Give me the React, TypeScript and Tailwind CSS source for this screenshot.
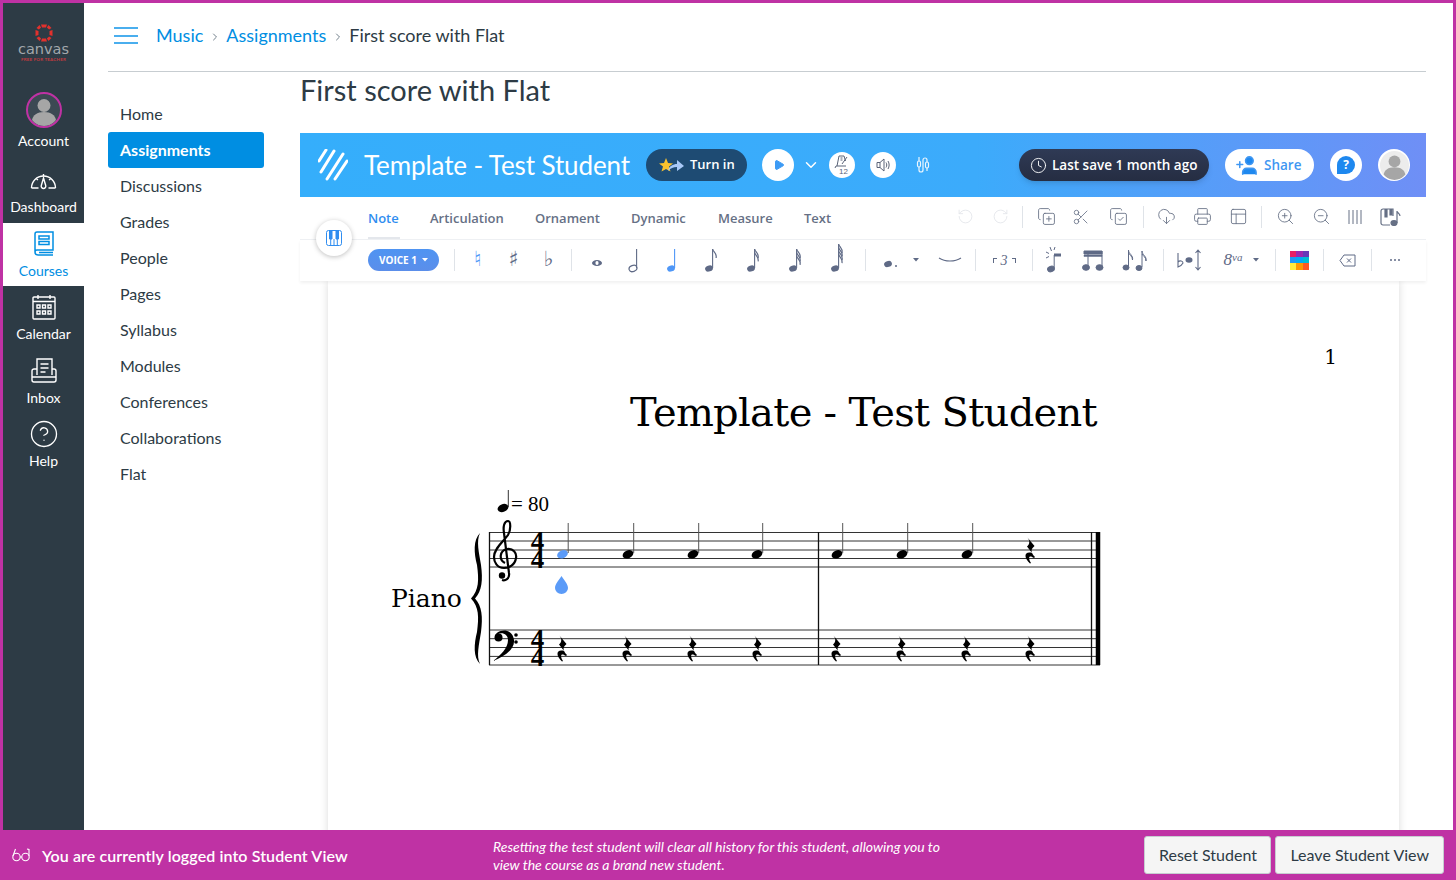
import React from 'react';
import { ChevronDown, ChevronRight, CircleHelp, Clock, CloudDownload, CopyCheck, CopyPlus, PanelsTopLeft, Play, Printer, RotateCcw, RotateCw, Scissors, UserPlus, ZoomIn, ZoomOut } from 'lucide-react';

const courseLinks = ['Home', 'Assignments', 'Discussions', 'Grades', 'People', 'Pages', 'Syllabus', 'Modules', 'Conferences', 'Collaborations', 'Flat'];
const tabs = [
  { label: 'Note', cls: 'w-[62px] text-[#2f8df0]' },
  { label: 'Articulation', cls: 'w-[105px]' },
  { label: 'Ornament', cls: 'w-[96px]' },
  { label: 'Dynamic', cls: 'w-[87px]' },
  { label: 'Measure', cls: 'w-[86px]' },
  { label: 'Text', cls: 'w-[40px]' },
];

const Silhouette = () => (
  <svg viewBox="0 0 32 32" className="w-full h-full">
    <circle cx="16" cy="11.500" r="6.500" fill="#a6a6a6" />
    <path d="M16 18c-7 0-11 3-12 8a15 15 0 0 0 24 0c-1-5-5-8-12-8z" fill="#a6a6a6" />
  </svg>
);

const Divider = ({ className = '' }: { className?: string }) => <div className={`w-px h-[22px] bg-[#dfe3e8] shrink-0 ${className}`} />;

const Cell = ({ className, children }: { className: string; children: React.ReactNode }) => (
  <div className={`flex justify-center items-center shrink-0 h-[30px] ${className}`}>{children}</div>
);

const Caret = () => (
  <svg width="6" height="4" viewBox="0 0 6 4" className="shrink-0"><path d="M0 0h6L3 3.500z" fill="currentColor" /></svg>
);

// single note with 0..4 flags, open = hollow head
const Note = ({ flags = 0, open = false, color = '#5f6a86', tall = false }: { flags?: number; open?: boolean; color?: string; tall?: boolean }) => {
  const top = tall ? 1 : 6;
  return (
    <svg width="18" height="30" viewBox="0 0 18 30" className="mb-[4px] -ml-[3px]">
      <ellipse cx="7" cy="25.500" rx="4" ry="3" transform="rotate(-20 7 25.500)" fill={open ? 'none' : color} stroke={color} strokeWidth={open ? 1.2 : 0} />
      <path d={`M10.600 25V${top}`} stroke={color} strokeWidth="1.100" />
      {Array.from({ length: flags }).map((_, i) => (
        <path key={i} d={`M10.600 ${top + i * 3.4}c.5 3 4.500 4 3.500 9`} fill="none" stroke={color} strokeWidth="1.200" />
      ))}
    </svg>
  );
};

const Rest = ({ x, y }: { x: number; y: number }) => (
  <path transform={`translate(${x} ${y})`} d="M-3 0L4.500 9C1 12 0 15 5 20L4 21C0 18-3 19 1 26L0 26.500C-6 21-6 15 0 15.500C1 15.500 2 16 2.500 16.500L-3 9.500C0 7 0 3-3 0Z" fill="#000" />
);

const QuarterUp = ({ x, color = '#000' }: { x: number; color?: string }) => (
  <g>
    <ellipse cx={x} cy={554.3} rx="5.600" ry="3.900" transform={`rotate(-22 ${x} 554.3)`} fill={color} />
    <path d={`M${x + 5.7} 553V523`} stroke="#555" strokeWidth="1" />
  </g>
);

const Score = () => {
  const trebleLines = [532.5, 541, 550, 558.5, 567];
  const bassLines = [630, 638.7, 647.5, 656.4, 665];
  return (
    <svg width="760" height="220" viewBox="370 480 760 220" className="ml-[42px] mt-[40px] shrink-0">
      <text x="391" y="607" fontFamily="'DejaVu Serif', serif" fontSize="25" fill="#000">Piano</text>
      <ellipse cx="503" cy="508" rx="5.600" ry="3.900" transform="rotate(-22 503 508)" fill="#000" />
      <path d="M508.300 507V490" stroke="#333" strokeWidth="1" />
      <text x="511" y="511" fontFamily="'Liberation Serif', serif" fontSize="21" fill="#000">= 80</text>

      {[...trebleLines, ...bassLines].map((y) => (
        <path key={y} d={`M489 ${y}H1100`} stroke="#333" strokeWidth="1" />
      ))}
      <path d="M489.500 532V665M818.500 532V665M1091.500 532V665" stroke="#111" strokeWidth="1.300" />
      <path d="M1098 532V665" stroke="#000" strokeWidth="4.500" />

      <path d="M480 533C473 540 474 553 477 565C479 580 479 590 471 598.500C479 607 479 617 477 632C474 644 473 657 480 664C476 656 479 645 481 632C483 617 482 606 475 598.500C482 591 483 580 481 565C479 553 476 541 480 533Z" fill="#000" />

      {/* treble clef */}
      <path d="M505 563C499 560 499 551 507 549C513 548 517 553 516 558C515 565 509 568 504 568C497 568 494 562 494 557C494 548 504 541 508 535C511 530 511 521 508 521C504 521 503 527 504 533L509 573C510 579 505 581 502 580" fill="none" stroke="#000" strokeWidth="2.200" />
      <circle cx="502" cy="575.500" r="3.200" fill="#000" />
      {/* bass clef */}
      <path d="M495 637C495 630 512 626 514 640C515 650 503 657 493 661C501 655 508 648 508 640C508 632 498 631 495 637Z" fill="#000" />
      <circle cx="498.500" cy="637.500" r="4" fill="#000" />
      <circle cx="516" cy="635" r="1.800" fill="#000" />
      <circle cx="516" cy="642" r="1.800" fill="#000" />

      <text fontFamily="'Liberation Serif', serif" fontWeight="700" fontSize="27" textAnchor="middle" fill="#000">
        <tspan x="537.500" y="550">4</tspan>
        <tspan x="537.500" y="568">4</tspan>
        <tspan x="537.500" y="648">4</tspan>
        <tspan x="537.500" y="666">4</tspan>
      </text>

      <QuarterUp x={562.5} color="#5b9bf8" />
      {[628, 693, 757, 837, 902, 967].map((x) => (
        <QuarterUp key={x} x={x} />
      ))}
      <Rest x={1030} y={537} />
      {[562, 627, 692, 757, 836, 901, 966, 1030].map((x) => (
        <Rest key={x} x={x} y={635} />
      ))}
      <path d="M561.500 576C564 580 568 584 568 588A6.500 6 0 0 1 555 588C555 584 559 580 561.500 576Z" fill="#5b9bf8" />
    </svg>
  );
};

const SideItem = ({ label, active, children }: { label: string; active?: boolean; children: React.ReactNode }) => (
  <div className={`h-[63.500px] flex flex-col items-center justify-start pt-[6px] ${active ? 'bg-white text-[#008ee2]' : 'text-white'}`}>
    <div className="h-[30px] flex items-center justify-center">{children}</div>
    <div className="text-[14px] leading-[20px] mt-[2px]">{label}</div>
  </div>
);

export default function App() {
  return (
    <div className="w-[1456px] h-[880px] overflow-hidden flex flex-col bg-white font-['Lato',sans-serif] text-[#2d3b45]">
      <div className="flex-1 min-h-0 flex border-t-[3px] border-x-[3px] border-[#bf32a4]">
        {/* Global nav */}
        <aside className="w-[81px] shrink-0 bg-[#2d3b45] flex flex-col">
          <div className="h-[83px] flex flex-col items-center pt-[20px]">
            <svg width="20" height="20" viewBox="0 0 20 20">
              <g fill="#e2312d">
                <path d="M7 1.500h6l-1 3H8z" />
                <path d="M7 18.500h6l-1-3H8z" />
                <path d="M1.500 7v6l3-1V8z" />
                <path d="M18.500 7v6l-3-1V8z" />
                <path d="M2.500 5l3-3 1.600 2.400-2.200 2.200z" />
                <path d="M17.500 5l-3-3-1.600 2.400 2.200 2.200z" />
                <path d="M2.500 15l3 3 1.600-2.400-2.200-2.200z" />
                <path d="M17.500 15l-3 3-1.600-2.400 2.200-2.200z" />
              </g>
            </svg>
            <div className="text-[#a3a8ac] text-[14.500px] leading-[15px] font-['DejaVu_Sans',sans-serif] -mt-[1px]">canvas</div>
            <div className="text-[#c23a3f] text-[4.500px] leading-[6px] font-bold tracking-[0.2px]">FREE FOR TEACHER</div>
          </div>
          <div className="h-[73px] flex flex-col items-center pt-[6px] text-white">
            <div className="w-[36px] h-[36px] rounded-full border-2 border-[#bf32a4] overflow-hidden bg-[#3c4953]">
              <Silhouette />
            </div>
            <div className="text-[14px] leading-[20px] mt-[3px]">Account</div>
          </div>
          <SideItem label="Dashboard">
            <svg width="27" height="20" viewBox="0 0 27 20" fill="none" stroke="currentColor" strokeWidth="1.400">
              <path d="M1.500 18a12 12 0 0 1 24 0M1.500 18h7M18.500 18h7" />
              <path d="M13.500 8l2.200 7.500a2.300 2.300 0 1 1-4.400 0z" />
              <path d="M13.500 6V4M6.500 9l1.500 1M20.500 9L19 10" />
            </svg>
          </SideItem>
          <SideItem label="Courses" active>
            <svg width="22" height="26" viewBox="0 0 22 26" fill="none" stroke="currentColor" strokeWidth="1.500">
              <path d="M2 21V3a2 2 0 0 1 2-2h16v18H4a2 2 0 0 0-2 2c0 2 1 3 3 3h15" />
              <rect x="6" y="5" width="10" height="3" />
              <rect x="6" y="10.500" width="10" height="3" />
              <path d="M6 21.500h14" />
            </svg>
          </SideItem>
          <SideItem label="Calendar">
            <svg width="24" height="26" viewBox="0 0 24 26" fill="none" stroke="currentColor" strokeWidth="1.400">
              <rect x="1" y="3" width="22" height="22" rx="1" />
              <path d="M1 7.500h22M6 1v4M18 1v4" />
              <path d="M5 11h3v3H5zM10.500 11h3v3h-3zM16 11h3v3h-3zM5 17h3v3H5zM10.500 17h3v3h-3zM16 17h3v3h-3z" />
            </svg>
          </SideItem>
          <SideItem label="Inbox">
            <svg width="26" height="26" viewBox="0 0 26 26" fill="none" stroke="currentColor" strokeWidth="1.400">
              <path d="M6 17V1h15v16" />
              <path d="M9.500 6h8M9.500 10h8M9.500 14h5" />
              <path d="M6 11H3a2 2 0 0 0-2 2v9a2 2 0 0 0 2 2h20a2 2 0 0 0 2-2v-9a2 2 0 0 0-2-2h-2M1 16v3h24v-3" />
            </svg>
          </SideItem>
          <SideItem label="Help">
            <CircleHelp size={30} strokeWidth={1.050} />
          </SideItem>
        </aside>

        <main className="flex-1 min-w-0 pl-[24px] pr-[27px] flex flex-col">
          {/* Breadcrumbs */}
          <header className="h-[69px] shrink-0 border-b border-[#c7cdd1] flex items-center text-[18px] pb-[3px]">
            <div className="w-[48px] pl-[6px]">
              <div className="w-[24px] flex flex-col gap-[5.500px]">
                <div className="h-[2px] bg-[#4aaeee]" />
                <div className="h-[2px] bg-[#4aaeee]" />
                <div className="h-[2px] bg-[#4aaeee]" />
              </div>
            </div>
            <span className="text-[#008ee2]">Music</span>
            <ChevronRight size={12} className="mx-[5.500px] mt-[3px] text-[#73818c]" />
            <span className="text-[#008ee2]">Assignments</span>
            <ChevronRight size={12} className="mx-[5.500px] mt-[3px] text-[#73818c]" />
            <span>First score with Flat</span>
          </header>

          <div className="flex-1 min-h-0 flex">
            {/* Course nav */}
            <nav className="w-[156px] shrink-0 pt-[24px] text-[16px]">
              {courseLinks.map((item) => (
                <div key={item} className={`h-[36px] px-[12px] flex items-center rounded-[3px] ${item === 'Assignments' ? 'bg-[#008ee2] text-white font-bold' : ''}`}>
                  {item}
                </div>
              ))}
            </nav>

            <div className="flex-1 min-w-0 ml-[36px] flex flex-col">
              <h1 className="h-[61px] shrink-0 text-[29px] leading-[36px] text-[#2d3b45]">First score with Flat</h1>

              {/* Flat editor */}
              <div className="flex-1 min-h-0 flex flex-col relative font-['Open_Sans',sans-serif]">
                <div className="h-[64px] shrink-0 bg-[linear-gradient(90deg,#35aefb_0%,#3cabfb_60%,#6f8ff6_100%)] flex items-center text-white">
                  <svg width="30" height="32" viewBox="0 0 30 32" className="ml-[18px]" stroke="#fff" strokeWidth="3" strokeLinecap="round">
                    <path d="M1 12L8 1M3 23L16 2M9 30L25 5M17 30L29 12" />
                  </svg>
                  <span className="ml-[16px] w-[282px] shrink-0 font-['Lato',sans-serif] text-[26px] tracking-[-0.1px]">Template - Test Student</span>
                  <div className="w-[101px] h-[32px] shrink-0 rounded-full bg-[#1e4b73] flex items-center pl-[12px] text-[13px] font-semibold">
                    <svg width="27" height="16" viewBox="0 0 27 16" className="mr-[5px]">
                      <path d="M8 1l2 5 5 .5-4 3 1.500 5L8 12l-4.500 2.500L5 9.500l-4-3L6 6z" fill="#f9c22e" />
                      <path d="M10 14c1-5 5-7 9-7V3l7 6-7 5v-4c-4 0-6 1-9 4z" fill="#a9c9f7" />
                    </svg>
                    Turn in
                  </div>
                  <div className="w-[32px] h-[32px] ml-[15px] shrink-0 rounded-full bg-white flex items-center justify-center">
                    <Play size={12} fill="#3d9bf5" stroke="#3d9bf5" className="ml-[1px]" />
                  </div>
                  <ChevronDown size={18} strokeWidth={2} className="ml-[8px] shrink-0" />
                  <div className="w-[26px] h-[26px] ml-[9px] shrink-0 rounded-full bg-white flex items-center justify-center">
                    <svg width="18" height="20" viewBox="0 0 18 20" fill="none" stroke="#5b6478" strokeWidth="1">
                      <path d="M4 11L6 1h5l1.500 5M2 13l1-2h10" />
                      <path d="M7.500 3h2M7.500 5h2M14 2L9 9" />
                      <text x="6" y="19" fontSize="8" fontFamily="'Liberation Sans',sans-serif" fill="#5b6478" stroke="none">12</text>
                    </svg>
                  </div>
                  <div className="w-[26px] h-[26px] ml-[15px] shrink-0 rounded-full bg-white flex items-center justify-center">
                    <svg width="16" height="16" viewBox="0 0 16 16" fill="none" stroke="#5b6478" strokeWidth="1">
                      <path d="M2 5.500h3L9 2v12l-4-3.500H2zM5 5.500v5M11 5.500c1 1.500 1 3.500 0 5M13 4c1.500 2.500 1.500 5.500 0 8" />
                    </svg>
                  </div>
                  <svg width="16" height="18" viewBox="0 0 16 18" fill="none" stroke="#fff" strokeWidth="1.200" className="ml-[19px] shrink-0 opacity-90">
                    <path d="M4 1v4M4 11v3a2 2 0 0 0 4 0V4a2 2 0 0 1 4 0v2M12 12v3" />
                    <rect x="2.500" y="5" width="3" height="6" rx="1.500" />
                    <rect x="10.500" y="6" width="3" height="6" rx="1.500" />
                  </svg>
                  <div className="w-[190px] h-[32px] ml-[88px] shrink-0 rounded-full bg-[linear-gradient(180deg,#2f3a55,#252d42)] shadow-md flex items-center pl-[11px] text-[13.500px] font-semibold whitespace-nowrap">
                    <Clock size={17} strokeWidth={1.300} className="mr-[5px]" />
                    Last save 1 month ago
                  </div>
                  <div className="w-[89px] h-[32px] ml-[16px] shrink-0 rounded-full bg-white text-[#3f97f2] flex items-center pl-[10px] text-[13.500px] font-semibold">
                    <UserPlus size={23} fill="#1e88ef" strokeWidth={1.600} className="mr-[6px] -scale-x-100" />
                    Share
                  </div>
                  <div className="w-[32px] h-[32px] ml-[16px] shrink-0 rounded-full bg-white flex items-center justify-center">
                    <div className="w-[18px] h-[18px] rounded-full rounded-bl-none bg-[#1e88ef] text-white text-[12px] font-bold leading-[18px] text-center">?</div>
                  </div>
                  <div className="w-[32px] h-[32px] ml-[16px] shrink-0 rounded-full bg-white flex items-center justify-center overflow-hidden">
                    <div className="w-[29px] h-[29px] rounded-full bg-[#ececec] overflow-hidden"><Silhouette /></div>
                  </div>
                </div>

                {/* Tabs row */}
                <div className="h-[43px] shrink-0 border-b border-[#eef0f3] flex items-stretch pl-[68px] text-[13px] font-semibold text-[#667085] relative">
                  {tabs.map((t) => (
                    <div key={t.label} className={`shrink-0 pt-[12px] ${t.cls}`}>{t.label}</div>
                  ))}
                  <div className="absolute left-[68px] bottom-0 w-[32px] h-[2px] bg-[#e4e7ec]" />
                  <div className="flex items-center h-[42px] ml-[103px] pb-[3px] text-[#667085]">
                    <Cell className="w-[36px] text-[#e3e5ea]"><RotateCcw size={17} strokeWidth={1.200} /></Cell>
                    <Cell className="w-[34px] text-[#e3e5ea]"><RotateCw size={17} strokeWidth={1.200} /></Cell>
                    <Divider className="ml-[5px]" />
                    <Cell className="w-[46px]"><CopyPlus size={19} strokeWidth={1.100} /></Cell>
                    <Cell className="w-[24px]"><Scissors size={18} strokeWidth={1.100} /></Cell>
                    <Cell className="w-[50px]"><CopyCheck size={19} strokeWidth={1.100} /></Cell>
                    <Divider />
                    <Cell className="w-[45px]"><CloudDownload size={19} strokeWidth={1.100} /></Cell>
                    <Cell className="w-[26px]"><Printer size={19} strokeWidth={1.100} /></Cell>
                    <Cell className="w-[46px]"><PanelsTopLeft size={19} strokeWidth={1.100} /></Cell>
                    <Divider />
                    <Cell className="w-[46px]"><ZoomIn size={19} strokeWidth={1.100} /></Cell>
                    <Cell className="w-[26px]"><ZoomOut size={19} strokeWidth={1.100} /></Cell>
                    <Cell className="w-[42px]">
                      <svg width="16" height="16" viewBox="0 0 16 16" stroke="currentColor" strokeWidth="1"><path d="M2 1v14M6 1v14M10 1v14M14 1v14" /></svg>
                    </Cell>
                    <Cell className="w-[30px]">
                      <svg width="22" height="18" viewBox="0 0 22 18" fill="none" stroke="currentColor" strokeWidth="1.200">
                        <path d="M10 17H3a2 2 0 0 1-2-2V3a2 2 0 0 1 2-2h10v7" />
                        <path d="M5 1v8h2V1M10 1v6h2V1" fill="currentColor" />
                        <ellipse cx="14" cy="15" rx="3" ry="2.500" fill="currentColor" />
                        <path d="M17 15V3c0 2 3 2 3 5" />
                      </svg>
                    </Cell>
                  </div>
                </div>

                {/* Piano toggle sits across the two rows */}
                <div className="absolute left-[16px] top-[87px] w-[36px] h-[36px] rounded-full bg-white shadow-[0_1px_5px_rgba(0,0,0,0.25)] flex items-center justify-center z-10">
                  <svg width="16" height="16" viewBox="0 0 16 16" fill="none" stroke="#2f8df0" strokeWidth="1">
                    <rect x="0.500" y="0.500" width="15" height="15" rx="2" />
                    <path d="M3.500 1h2.500v8H3.500zM10 1h2.500v8H10zM8 9v6" fill="#2f8df0" />
                    <path d="M4.700 9v6M11.300 9v6" />
                  </svg>
                </div>

                {/* Note tools row */}
                <div className="h-[41px] shrink-0 flex items-center pl-[68px] pb-[1px] text-[#5f6a86] shadow-[0_2px_3px_rgba(0,0,0,0.06)] relative z-[5] bg-white">
                  <div className="w-[71px] h-[22px] shrink-0 rounded-full bg-[linear-gradient(180deg,#4f94f2,#5b8eea)] text-white text-[10px] font-bold flex items-center justify-center gap-[5px]">
                    VOICE 1
                    <Caret />
                  </div>
                  <Divider className="ml-[15px]" />
                  <Cell className="w-[45px] text-[#4f97f7] text-[21px] font-['DejaVu_Sans',sans-serif]">♮</Cell>
                  <Cell className="w-[27px] text-[21px] font-['DejaVu_Sans',sans-serif]">♯</Cell>
                  <Cell className="w-[43px] text-[21px] font-['DejaVu_Sans',sans-serif]">♭</Cell>
                  <Divider className="ml-[1px]" />
                  <Cell className="w-[50px]">
                    <svg width="12" height="8" viewBox="0 0 12 8" className="mt-[6px]"><ellipse cx="6" cy="4" rx="5" ry="3" fill="#5f6a86" /><ellipse cx="6" cy="4" rx="1.600" ry="2" fill="#fff" /></svg>
                  </Cell>
                  <Cell className="w-[28px]"><Note open /></Cell>
                  <Cell className="w-[48px]"><Note color="#4f97f7" /></Cell>
                  <Cell className="w-[28px]"><Note flags={1} /></Cell>
                  <Cell className="w-[56px]"><Note flags={2} /></Cell>
                  <Cell className="w-[28px]"><Note flags={3} /></Cell>
                  <Cell className="w-[57px]"><Note flags={4} tall /></Cell>
                  <Divider className="-ml-[2px]" />
                  <Cell className="w-[45px] pl-[5px]">
                    <svg width="16" height="10" viewBox="0 0 16 10" className="mt-[7px]"><ellipse cx="5" cy="5" rx="4" ry="3" transform="rotate(-20 5 5)" fill="currentColor" /><circle cx="13" cy="7" r="1" fill="currentColor" /></svg>
                  </Cell>
                  <Cell className="w-[10px]"><Caret /></Cell>
                  <Cell className="w-[54px] pl-[4px]">
                    <svg width="24" height="6" viewBox="0 0 24 6" fill="none" stroke="currentColor" strokeWidth="1.100"><path d="M1 1c6 4 16 4 22 0" /></svg>
                  </Cell>
                  <Divider />
                  <Cell className="w-[56px] text-[14px] italic font-['Liberation_Serif',serif] gap-[4px]">
                    <span className="w-[4px] h-[5px] border-l border-t border-[#5f6a86]" />3<span className="w-[4px] h-[5px] border-r border-t border-[#5f6a86]" />
                  </Cell>
                  <Divider />
                  <Cell className="w-[42px]">
                    <svg width="16" height="26" viewBox="0 0 16 26" stroke="currentColor" fill="none" strokeWidth="1">
                      <ellipse cx="5" cy="22" rx="3.500" ry="2.700" transform="rotate(-20 5 22)" fill="currentColor" />
                      <path d="M8.200 21V8" />
                      <path d="M8 8h7" strokeWidth="3" />
                      <path d="M4 0l1.500 4M0 5l3 1.500M0 11l3-1.500M9 0l-1 3" />
                    </svg>
                  </Cell>
                  <Cell className="w-[36px]">
                    <svg width="22" height="22" viewBox="0 0 22 22" stroke="currentColor" fill="currentColor">
                      <path d="M2 2h18v3H2z" />
                      <path d="M6 2v16M20 2v16" fill="none" strokeWidth="1" />
                      <path d="M2 6h18v1.500H2z" strokeWidth="0.500" />
                      <ellipse cx="4" cy="18.500" rx="3.500" ry="2.800" />
                      <ellipse cx="17.500" cy="18.500" rx="3.500" ry="2.800" />
                    </svg>
                  </Cell>
                  <Cell className="w-[48px]">
                    <svg width="26" height="22" viewBox="0 0 26 22" stroke="currentColor" fill="none" strokeWidth="1">
                      <ellipse cx="4" cy="18.500" rx="3" ry="2.500" fill="currentColor" />
                      <ellipse cx="17" cy="19" rx="3" ry="2.500" fill="currentColor" />
                      <path d="M6.500 18V1c0 4 5 5 4 10M20 18V2c0 4 5 5 4 10M6.500 4c1 2 4 3 4 7M20 5c1 2 4 3 4 7" />
                    </svg>
                  </Cell>
                  <Divider className="ml-[4px]" />
                  <Cell className="w-[52px]">
                    <svg width="28" height="22" viewBox="0 0 28 22" stroke="currentColor" fill="none" strokeWidth="1.100">
                      <path d="M2 4v14c3-1 4-2 5-4 0-2-3-3-5-1" />
                      <ellipse cx="13" cy="11" rx="3.500" ry="2.700" fill="currentColor" stroke="none" />
                      <path d="M22 1v20M19.500 4L22 1l2.500 3M19.500 18l2.500 3 2.500-3" />
                    </svg>
                  </Cell>
                  <Cell className="w-[34px] text-[17px] italic font-['Liberation_Serif',serif] whitespace-nowrap">8<span className="text-[11px] -mt-[6px]">va</span></Cell>
                  <Cell className="w-[12px]"><Caret /></Cell>
                  <Divider className="ml-[13px]" />
                  <Cell className="w-[47px]">
                    <div className="w-[19px] h-[19px] grid grid-cols-3 grid-rows-3">
                      <div className="bg-[#e91e63]" /><div className="bg-[#9c27b0]" /><div className="bg-[#673ab7]" />
                      <div className="bg-[#2196f3]" /><div className="bg-[#03a9f4]" /><div className="bg-[#00bcd4]" />
                      <div className="bg-[#ffeb3b]" /><div className="bg-[#ff9800]" /><div className="bg-[#ff5722]" />
                    </div>
                  </Cell>
                  <Divider />
                  <Cell className="w-[47px]">
                    <svg width="17" height="13" viewBox="0 0 17 13" stroke="currentColor" fill="none" strokeWidth="1">
                      <path d="M5 1h11v11H5L1 6.500zM8 4.500l4 4M12 4.500l-4 4" />
                    </svg>
                  </Cell>
                  <Divider />
                  <Cell className="w-[45px] gap-[2px]">
                    <span className="w-[2px] h-[2px] rounded-full bg-[#5f6a86]" />
                    <span className="w-[2px] h-[2px] rounded-full bg-[#5f6a86]" />
                    <span className="w-[2px] h-[2px] rounded-full bg-[#5f6a86]" />
                  </Cell>
                </div>

                {/* Score sheet */}
                <div className="flex-1 min-h-0 overflow-hidden px-[28px] pb-0">
                  <div className="w-[1071px] h-[600px] bg-white shadow-[0_0_8px_rgba(0,0,0,0.15)] flex flex-col font-['DejaVu_Serif',serif] text-black">
                    <div className="text-right pr-[62px] pt-[63px] text-[20px] leading-[26px] font-['DejaVu_Serif',serif]">1</div>
                    <div className="text-center text-[40px] leading-[56px] mt-[14px] tracking-[-0.7px]">Template - Test Student</div>
                    <Score />
                  </div>
                </div>
              </div>
            </div>
          </div>
        </main>
      </div>

      {/* Student view bar */}
      <footer className="h-[50px] shrink-0 bg-[#bf32a4] text-white flex items-center">
        <svg width="18" height="14" viewBox="0 0 18 14" fill="none" stroke="#fff" strokeWidth="1.100" className="ml-[12px] shrink-0">
          <circle cx="4.500" cy="9" r="3.700" />
          <circle cx="13.500" cy="9" r="3.700" />
          <path d="M8.200 9h1.600M1 8L3.500 1M17 8V1.500L15 1" />
        </svg>
        <span className="ml-[12px] w-[451px] shrink-0 text-[16px] font-semibold tracking-[0.1px] pt-[1px]">You are currently logged into Student View</span>
        <div className="w-[460px] shrink-0 text-[14px] leading-[18px] italic pt-[1px]">
          Resetting the test student will clear all history for this student, allowing you to view the course as a brand new student.
        </div>
        <button className="ml-auto h-[38px] px-[13.500px] bg-[#f5f5f5] border border-[#c7cdd1] rounded-[3px] text-[#2d3b45] text-[16px]">Reset Student</button>
        <button className="ml-[4px] mr-[12px] h-[38px] px-[14px] bg-[#f5f5f5] border border-[#c7cdd1] rounded-[3px] text-[#2d3b45] text-[16px]">Leave Student View</button>
      </footer>
    </div>
  );
}
